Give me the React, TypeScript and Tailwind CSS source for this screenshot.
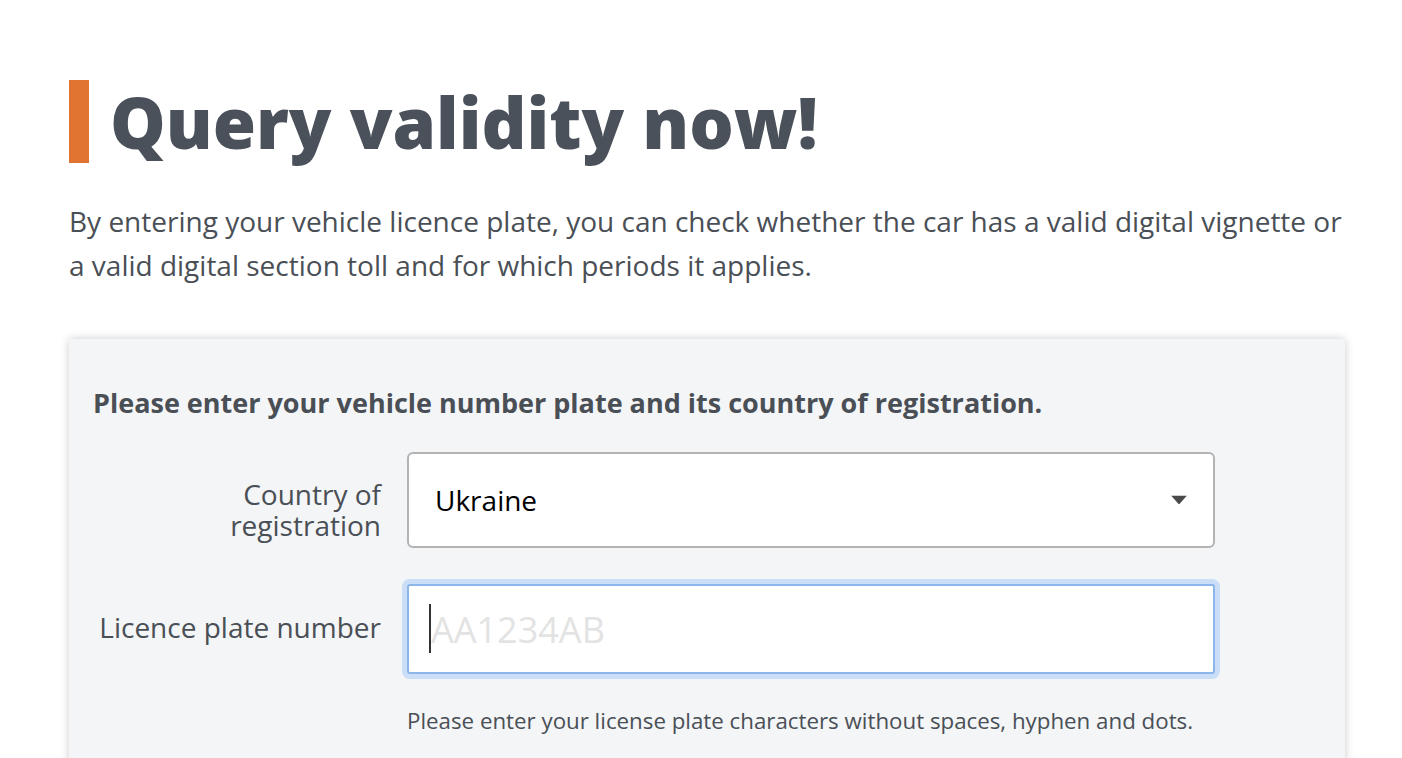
import { useState } from 'react';

const FONT = { fontFamily: '"Open Sans", "Noto Sans", sans-serif' };

export default function App() {
  const [plate, setPlate] = useState('');

  return (
    <div className="min-h-screen bg-white text-[#4a4f56]" style={FONT}>
      <div className="ml-[69px] w-[1276px] pt-[80px]">
        {/* Title */}
        <div className="flex items-center">
          <div className="h-[83px] w-[20px] shrink-0 bg-[#e07430]" />
          <h1 className="ml-[21px] text-[70px] font-extrabold leading-none text-[#4a515a]">
            Query validity now!
          </h1>
        </div>

        <p className="mt-[36px] text-[28px] leading-[44px] text-[#4a4f56]">
          By entering your vehicle licence plate, you can check whether the car has a valid digital vignette or
          a valid digital section toll and for which periods it applies.
        </p>

        {/* Form card */}
        <div className="mt-[52px] rounded-t-[3px] bg-[#f3f5f7] px-[24px] pt-[46px] pb-[40px] shadow-[0_0_10px_rgba(0,0,0,0.2)]">
          <h2 className="text-[27px] font-bold leading-[36px] text-[#4a4f56]">
            Please enter your vehicle number plate and its country of registration.
          </h2>

          <div className="mt-[31px] grid grid-cols-[288px_808px] gap-x-[26px]">
            <label className="flex items-center justify-end pt-[20px] text-right text-[28px] leading-[31px] text-[#4a4f56]">
              Country of
              <br />
              registration
            </label>
            <div className="relative flex h-[96px] items-center rounded-[6px] border-2 border-[#b3b3b3] bg-white pl-[26px]">
              <span className="text-[28px] text-black">Ukraine</span>
              <svg
                className="absolute right-[26px] top-1/2 -translate-y-1/2"
                width="16"
                height="9"
                viewBox="0 0 16 9"
              >
                <path d="M0 0h16L8 9z" fill="#4a4a4a" />
              </svg>
            </div>

            <label
              htmlFor="plate"
              className="mt-[36px] flex items-center justify-end pb-[4px] text-right text-[28px] text-[#4a4f56]"
            >
              Licence plate number
            </label>
            <div className="relative mt-[36px]">
              <input
                id="plate"
                autoFocus
                value={plate}
                onChange={(e) => setPlate(e.target.value)}
                placeholder="AA1234AB"
                className={
                  'h-[90px] w-full rounded-[3px] border-2 border-[#8cb5ec] bg-white pl-[22px] text-[36px] text-black outline-none ring-[5px] ring-[#cadef7] placeholder:text-[#e3e3e3] ' +
                  (plate ? 'caret-[#333]' : 'caret-transparent')
                }
              />
              {!plate && (
                <span className="pointer-events-none absolute left-[22px] top-[20px] h-[49px] w-[2px] bg-[#333]" />
              )}
            </div>

            <div />
            <p className="mt-[30px] text-[22.3px] text-[#4a4f56]">
              Please enter your license plate characters without spaces, hyphen and dots.
            </p>
          </div>
        </div>
      </div>
    </div>
  );
}
